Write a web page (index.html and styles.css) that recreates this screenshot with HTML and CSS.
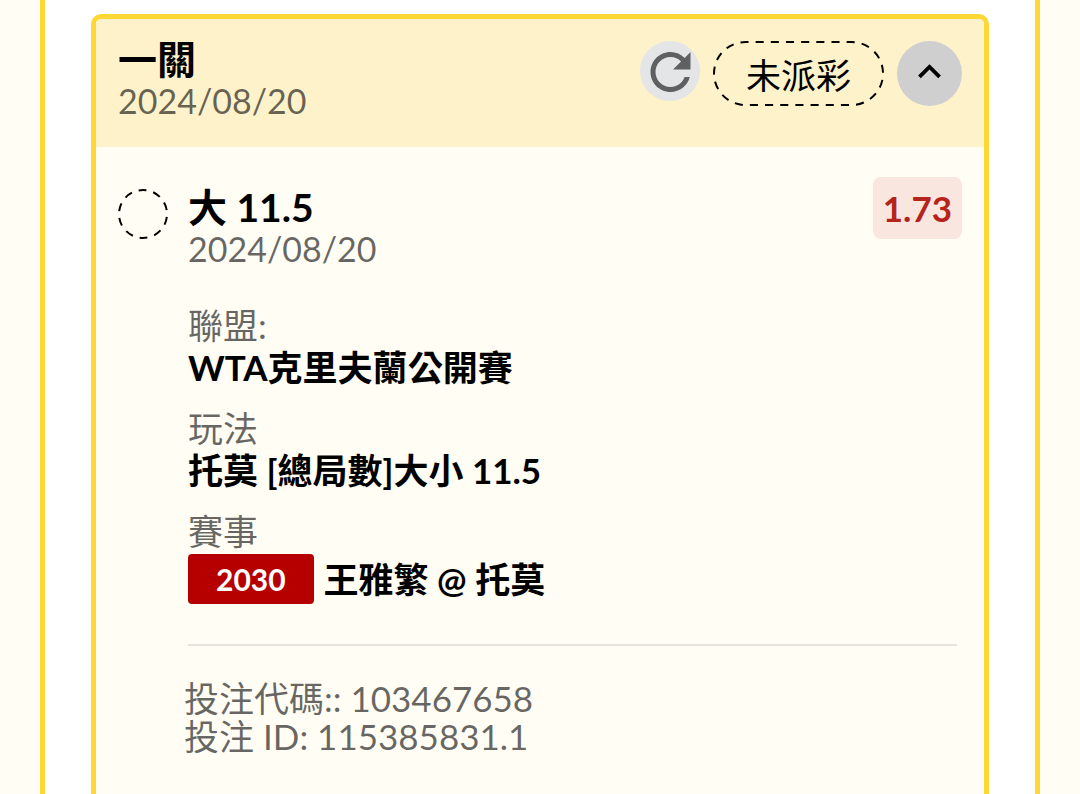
FILE: index.html
```
<!DOCTYPE html>
<html lang="zh-Hant">
<head>
<meta charset="utf-8">
<meta name="viewport" content="width=device-width, initial-scale=1">
<title>投注紀錄</title>
<link rel="stylesheet" href="styles.css">
</head>
<body>
<main class="frame">
  <article class="card">
    <header class="card-head">
      <div class="heading">
        <h1 class="title">一關</h1>
        <time class="date" datetime="2024-08-20">2024/08/20</time>
      </div>
      <div class="actions">
        <button class="round refresh" type="button" aria-label="重新整理">
          <svg viewBox="-.2 -.4 24 24" aria-hidden="true"><path d="M17.65 6.35C16.2 4.9 14.21 4 12 4c-4.42 0-7.99 3.58-7.99 8s3.57 8 7.99 8c3.73 0 6.84-2.55 7.73-6h-2.08c-.82 2.33-3.04 4-5.65 4-3.31 0-6-2.69-6-6s2.69-6 6-6c1.66 0 3.14.69 4.22 1.78L13 11h7V4l-2.35 2.35z"/></svg>
        </button>
        <span class="status">
          <svg class="status-outline" aria-hidden="true"><rect class="status-rect" x="1" y="1" rx="31.5" pathLength="405"/></svg>
          未派彩
        </span>
        <button class="round toggle" type="button" aria-label="收合" aria-expanded="true">
          <svg viewBox="-5.1 -4.2 34.2 34.2" aria-hidden="true"><path d="M7.41 15.41 12 10.83l4.59 4.58L18 14l-6-6-6 6z"/></svg>
        </button>
      </div>
    </header>
    <section class="bet">
      <svg class="pending" viewBox="0 0 50 50" aria-hidden="true"><circle cx="25" cy="25" r="24" pathLength="150"/></svg>
      <div class="bet-main">
        <div class="bet-top">
          <div class="heading">
            <h2 class="title">大 11.5</h2>
            <time class="date" datetime="2024-08-20">2024/08/20</time>
          </div>
          <strong class="odds">1.73</strong>
        </div>
        <dl class="details">
          <div class="detail">
            <dt class="label">聯盟:</dt>
            <dd class="value">WTA克里夫蘭公開賽</dd>
          </div>
          <div class="detail">
            <dt class="label">玩法</dt>
            <dd class="value">托莫 [總局數]大小 11.5</dd>
          </div>
          <div class="detail">
            <dt class="label">賽事</dt>
            <dd class="value match"><span class="code">2030</span><span>王雅繁 @ 托莫</span></dd>
          </div>
        </dl>
        <hr class="divider">
        <div class="ids">
          <p class="id-line">投注代碼:: 103467658</p>
          <p class="id-line">投注 ID: 115385831.1</p>
        </div>
      </div>
    </section>
  </article>
</main>
</body>
</html>
```
FILE: styles.css
```
* {
  box-sizing: border-box;
}

body {
  margin: 0;
  background: #fffdf4;
  color: #000;
  font-family: Lato, "Noto Sans CJK TC", sans-serif;
  font-size: 35px;
  line-height: 42px;
}

h1, h2, p, dl, dd {
  margin: 0;
}

.frame {
  display: flex;
  min-height: 100vh;
  margin: 0 40px;
  padding: 14px 46px 0;
  border: solid #fdd835;
  border-width: 0 5px;
  background: #fff;
}

.card {
  flex: 1;
  border: 5px solid #fdd835;
  border-bottom: 0;
  border-radius: 10px 10px 0 0;
  background: #fffdf4;
}

.card-head {
  display: flex;
  justify-content: space-between;
  padding: 22px 22px 25px;
  border-radius: 5px 5px 0 0;
  background: #fef2cb;
}

.heading {
  display: flex;
  flex-direction: column;
}

.card-head .heading {
  margin-top: -2px;
}

.title {
  font-size: 39px;
  font-weight: 700;
  line-height: 41px;
}

.date {
  font-size: 34px;
}

.date,
.label,
.ids {
  color: rgba(0, 0, 0, 0.6);
}

.actions {
  display: flex;
  align-items: flex-start;
  gap: 13px;
}

.round {
  padding: 0;
  border: 0;
  border-radius: 50%;
  cursor: pointer;
}

.round svg {
  display: block;
  width: 100%;
  height: 100%;
}

.refresh {
  width: 60px;
  height: 60px;
  background: #e4e5e7;
  fill: #5f6062;
}

.toggle {
  width: 65px;
  height: 65px;
  background: #cfcfcf;
  fill: #000;
}

.status {
  position: relative;
  padding: 3px 33px 0;
  line-height: 62px;
}

.status-outline {
  position: absolute;
  inset: 0;
  width: 100%;
  height: 100%;
}

.status-rect {
  width: calc(100% - 2px);
  height: calc(100% - 2px);
  fill: none;
  stroke: #000;
  stroke-width: 2;
  stroke-dasharray: 8 7;
  stroke-dashoffset: 5;
}

.bet {
  display: flex;
  gap: 20px;
  padding: 30px 22px 36px;
}

.pending {
  flex: none;
  width: 50px;
  height: 50px;
  margin-top: 12px;
  fill: none;
  stroke: #000;
  stroke-width: 2;
  stroke-dasharray: 8 7;
  stroke-dashoffset: 12;
}

.bet-main {
  flex: 1;
}

.bet-top {
  display: flex;
  justify-content: space-between;
  align-items: flex-start;
}

.bet-top .heading {
  margin-top: 10px;
}

.odds {
  padding: 10px;
  border-radius: 8px;
  background: #f8e6df;
  color: #b5231d;
}

.details {
  display: flex;
  flex-direction: column;
  gap: 19px;
  margin-top: 34px;
}

.value {
  font-weight: 700;
}

.match {
  display: flex;
  align-items: center;
  gap: 10px;
  margin-top: 2px;
}

.code {
  padding: 0 28px;
  border-radius: 4px;
  background: #b60000;
  color: #fff;
  font-size: 30px;
  line-height: 50px;
}

.divider {
  height: 2px;
  margin: 40px 5px 0 0;
  border: 0;
  background: #e6e3de;
}

.ids {
  margin: 33px 0 0 -4px;
  line-height: 38px;
}
```
